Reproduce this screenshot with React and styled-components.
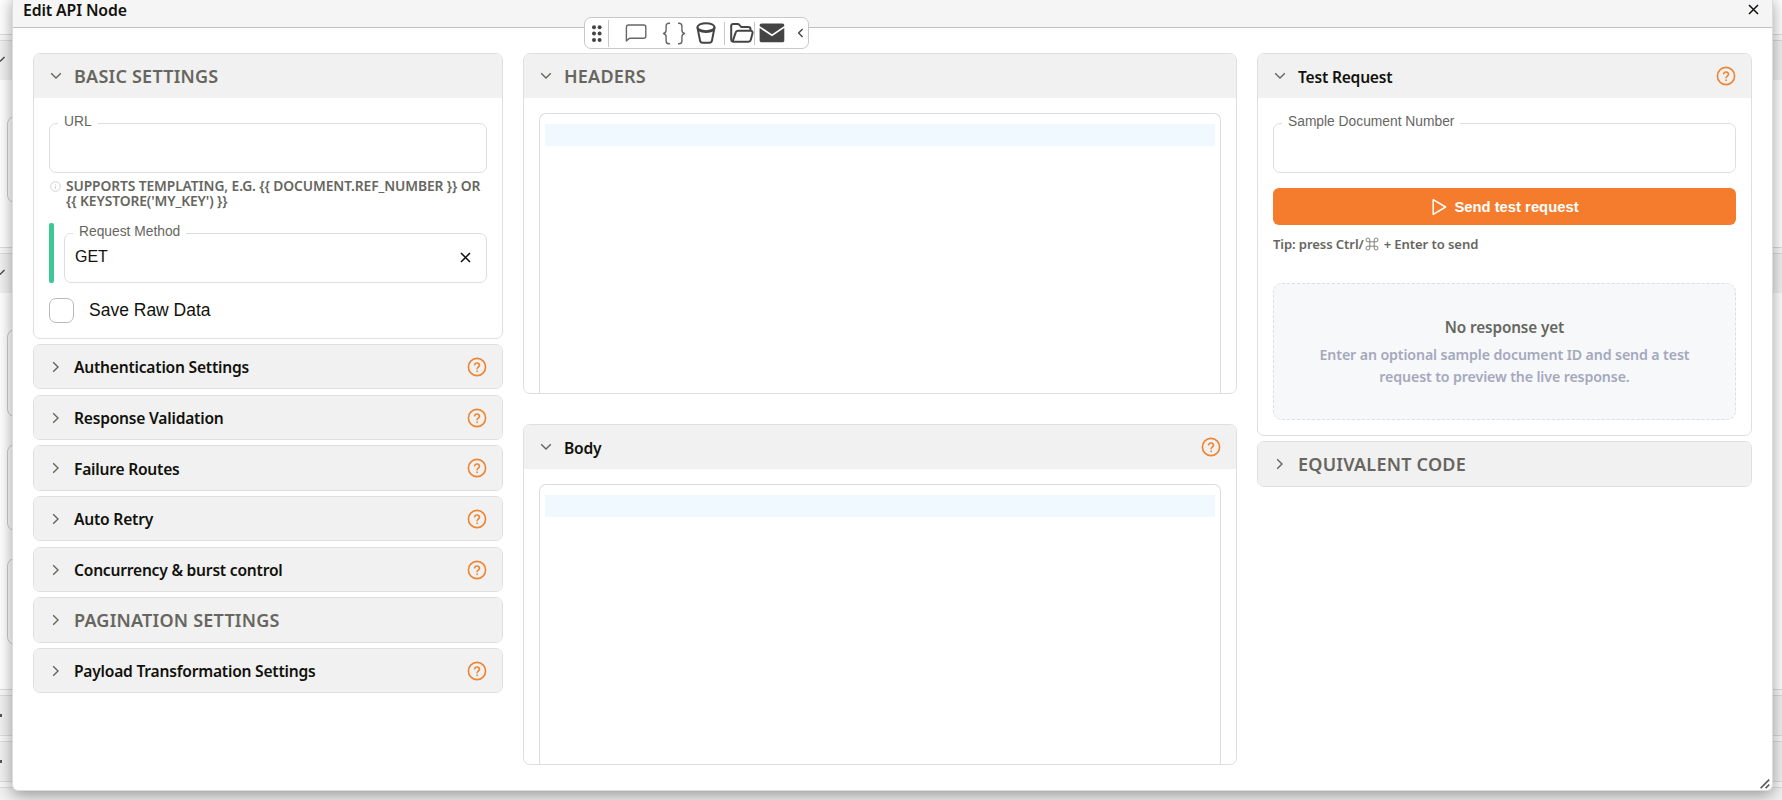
import { useState } from "react";
import styled, { createGlobalStyle } from "styled-components";

const PANELS = [
  { title: "Authentication Settings", help: true },
  { title: "Response Validation", help: true },
  { title: "Failure Routes", help: true },
  { title: "Auto Retry", help: true },
  { title: "Concurrency & burst control", help: true },
  { title: "PAGINATION SETTINGS", caps: true },
  { title: "Payload Transformation Settings", help: true },
];

const ChevronIcon = ({ open }) => (
  <Chevron viewBox="0 0 14 14" $open={open}>
    <path d="M4.2 2.2 9 7l-4.8 4.8" />
  </Chevron>
);

const HelpIcon = () => (
  <Help viewBox="0 0 20 20">
    <circle cx="10" cy="10" r="8.6" />
    <path d="M7.6 7.8a2.5 2.5 0 0 1 4.9.5c0 1.6-2.4 1.9-2.4 3.4" />
    <path d="M10.1 14v.4" />
  </Help>
);

const Panel = ({ title, caps, help, defaultOpen = false, height, children }) => {
  const [open, setOpen] = useState(defaultOpen);

  return (
    <Card $height={open ? height : undefined}>
      <CardHeader type="button" onClick={() => setOpen(!open)}>
        <ChevronIcon open={open} />
        <CardTitle $caps={caps}>{title}</CardTitle>
        {help && <HelpIcon />}
      </CardHeader>
      {open && children}
    </Card>
  );
};

const Editor = () => (
  <EditorBody>
    <EditorFrame>
      <ActiveLine />
    </EditorFrame>
  </EditorBody>
);

const FloatingToolbar = () => (
  <Toolbar>
    <ToolIcon width="13" height="19" viewBox="0 0 13 19" $fill $left={6}>
      <circle cx="3" cy="3.2" r="2" />
      <circle cx="8.6" cy="3.2" r="2" />
      <circle cx="3" cy="9.6" r="2" />
      <circle cx="8.6" cy="9.6" r="2" />
      <circle cx="3" cy="16" r="2" />
      <circle cx="8.6" cy="16" r="2" />
    </ToolIcon>
    <Divider $height={27} $left={4} />
    <ToolIcon width="22" height="18" viewBox="0 0 22 18" $left={16} $light>
      <path d="M3.2 1h15.6a2 2 0 0 1 2 2v9.2a2 2 0 0 1-2 2H5.6c-1.6 0-2 .5-2.700 1.300L1.400 17V3a2 2 0 0 1 1.800-2Z" />
    </ToolIcon>
    <ToolIcon width="24" height="23" viewBox="0 0 24 23" $left={15} $light>
      <path d="M8 1.2H7C4.8 1.2 4.1 2.2 4.1 4v4c0 2-.8 3-2.6 3.5 1.8.5 2.6 1.5 2.6 3.5v4c0 1.800.7 2.800 2.900 2.800h1" />
      <path d="M16 1.2h1c2.200 0 2.900 1 2.900 2.800v4c0 2 .8 3 2.600 3.500-1.800.5-2.600 1.500-2.600 3.500v4c0 1.800-.7 2.800-2.900 2.800h-1" />
    </ToolIcon>
    <ToolIcon width="20" height="22" viewBox="0 0 20 22" $left={10} $bold>
      <ellipse cx="10" cy="5.2" rx="8.6" ry="4" />
      <path d="M1.4 5.2 4 18.4C4.3 20 5.2 20.8 6.8 20.8h6.4c1.6 0 2.5-.8 2.8-2.4L18.6 5.2" />
      <path d="M3 8.3c3.4 2.2 10.6 2.2 14 0" />
    </ToolIcon>
    <Divider $height={23} $left={8} />
    <ToolIcon width="24" height="21" viewBox="0 0 24 21" $left={5} $bold>
      <path d="M2.6 18.6C1.6 18.3 1.2 17.6 1.2 16.5V3c0-1.200.7-2 2-2h4.200c1 0 1.500.2 2.100 1l1.600 2h7.200c1.500 0 2.200.8 2.200 2.200v1.600" />
      <path d="M2.6 18.6 5.6 9.6C6 8.3 6.7 7.8 8 7.8h12.6c1.6 0 2.3 1 1.9 2.5l-1.7 6.5c-.4 1.5-1 2-2.5 2H4c-.6 0-1-.1-1.4-.2Z" />
    </ToolIcon>
    <Divider $height={23} $left={0} />
    <ToolIcon width="26" height="20" viewBox="0 0 26 20" $fill $left={4}>
      <path d="M2.6.5h20.8c1.1 0 1.900.8 1.900 1.900v.6L13 11.2.6 3v-.6C.6 1.3 1.5.5 2.6.5Z" />
      <path d="M.6 5.100 13 13.300 25.300 5.100v12.300c0 1.100-.8 1.900-1.900 1.900H2.600c-1.100 0-2-.8-2-1.900Z" />
    </ToolIcon>
    <ToolIcon width="7" height="10" viewBox="0 0 7 10" $left={12}>
      <path d="M5.6 1 1.6 5l4 4" />
    </ToolIcon>
  </Toolbar>
);

const Backdrop = () => (
  <Canvas>
    <Spacer $height={34} />
    <Section>
      <SectionHead>
        <svg width="6" height="8" viewBox="0 0 6 8">
          <path d="M0 5.5 4.5 1" />
        </svg>
      </SectionHead>
    </Section>
    <NodeCard $top={36} $height={87} />
    <Spacer $height={44} />
    <Section>
      <SectionHead>
        <svg width="6" height="8" viewBox="0 0 6 8">
          <path d="M0 5.5 4.5 1" />
        </svg>
      </SectionHead>
    </Section>
    <NodeCard $top={36} $height={88} />
    <NodeCard $top={27} $height={87} />
    <NodeCard $top={27} $height={87} />
    <Spacer $height={44} />
    <ClosedSection>
      <Dot />
    </ClosedSection>
    <ClosedSection>
      <Dot />
    </ClosedSection>
    <ClosedSection />
  </Canvas>
);

const App = () => {
  const [saveRaw, setSaveRaw] = useState(false);

  return (
    <>
      <GlobalStyle />
      <Backdrop />
      <Dialog>
        <TitleBar>
          <DialogTitle>Edit API Node</DialogTitle>
          <CloseButton type="button" aria-label="Close">
            <svg width="11" height="11" viewBox="0 0 11 11">
              <path d="m1 1 9 9M10 1l-9 9" />
            </svg>
          </CloseButton>
        </TitleBar>

        <Columns>
          <Column>
            <Panel title="BASIC SETTINGS" caps defaultOpen height={285.33}>
              <BasicBody>
                <Field>
                  <FieldLabel>URL</FieldLabel>
                </Field>
                <Hint>
                  <svg width="11" height="11" viewBox="0 0 11 11">
                    <circle cx="5.5" cy="5.5" r="4.8" />
                    <path d="M5.5 3v.8M5.5 5v3" />
                  </svg>
                  <span>
                    SUPPORTS TEMPLATING, E.G. {"{{ DOCUMENT.REF_NUMBER }}"} OR
                    <br />
                    {"{{ KEYSTORE('MY_KEY') }}"}
                  </span>
                </Hint>
                <MethodRow>
                  <MethodBar />
                  <Field $grow>
                    <FieldLabel>Request Method</FieldLabel>
                    <FieldValue>GET</FieldValue>
                    <ClearIcon viewBox="0 0 11 11">
                      <path d="m1 1 9 9M10 1l-9 9" />
                    </ClearIcon>
                  </Field>
                </MethodRow>
                <CheckRow>
                  <Checkbox
                    type="checkbox"
                    checked={saveRaw}
                    onChange={(e) => setSaveRaw(e.target.checked)}
                  />
                  Save Raw Data
                </CheckRow>
              </BasicBody>
            </Panel>
            {PANELS.map((panel) => (
              <Panel key={panel.title} {...panel} />
            ))}
          </Column>

          <Column $gap={30}>
            <Panel title="HEADERS" caps defaultOpen height={341}>
              <Editor />
            </Panel>
            <Panel title="Body" help defaultOpen height={341}>
              <Editor />
            </Panel>
          </Column>

          <Column>
            <Panel title="Test Request" help defaultOpen height={382.67}>
              <RequestBody>
                <Field>
                  <FieldLabel>Sample Document Number</FieldLabel>
                </Field>
                <SendButton type="button">
                  <svg width="15" height="18" viewBox="0 0 15 18">
                    <path d="M1.2 1.6v14.8L13.6 9Z" />
                  </svg>
                  Send test request
                </SendButton>
                <Tip>
                  Tip: press Ctrl/
                  <CommandKey viewBox="0 0 14 14">
                    <path d="M4.8 4.8h4.4v4.4H4.8ZM4.8 4.8H3a1.9 1.9 0 1 1 1.8-1.9ZM9.2 4.8V2.9A1.9 1.9 0 1 1 11 4.8ZM9.2 9.2H11a1.9 1.9 0 1 1-1.8 1.9ZM4.8 9.2v1.9A1.9 1.9 0 1 1 3 9.2Z" />
                  </CommandKey>
                  + Enter to send
                </Tip>
                <EmptyState>
                  <EmptyTitle>No response yet</EmptyTitle>
                  <EmptyText>
                    Enter an optional sample document ID and send a test
                    <br />
                    request to preview the live response.
                  </EmptyText>
                </EmptyState>
              </RequestBody>
            </Panel>
            <Panel title="EQUIVALENT CODE" caps />
          </Column>
        </Columns>

        <ResizeHandle viewBox="0 0 10 10">
          <path d="M.6 9.2 9.2.6M5.6 9.2l3.6-3.6" />
        </ResizeHandle>
      </Dialog>
      <FloatingToolbar />
    </>
  );
};

// Base
const GlobalStyle = createGlobalStyle`
  * {
    box-sizing: border-box;
  }

  body {
    margin: 0;
    height: 800px;
    overflow: hidden;
    background: #fff;
    color: #11110d;
    font-family: "Noto Sans", "Open Sans", sans-serif;
    font-weight: 600;
  }
`;

// Page behind the dialog
const Canvas = styled.div`
  display: flex;
  flex-direction: column;
  height: 800px;
  background: #fff;
`;

const Spacer = styled.div`
  height: ${(props) => props.$height}px;
  flex-shrink: 0;
`;

const Section = styled.div`
  height: 46px;
  flex-shrink: 0;
  padding-top: 5px;
  border-top: 1px solid #dcdcdc;
  background: #f9f9f9;
`;

const SectionHead = styled.div`
  height: 40px;
  padding-top: 15px;
  border-top: 1px solid #dcdcdc;
  background: #f1f1f1;

  svg {
    display: block;
    fill: none;
    stroke: #444;
    stroke-width: 1.3;
  }
`;

const NodeCard = styled.div`
  height: ${(props) => props.$height}px;
  margin: ${(props) => props.$top}px 40px 0 7px;
  flex-shrink: 0;
  border: 1px solid #ccc;
  border-radius: 8px;
`;

const ClosedSection = styled.div`
  display: flex;
  align-items: center;
  height: 46px;
  flex-shrink: 0;
  border-top: 1px solid #dcdcdc;
  background: linear-gradient(#f9f9f9 5px, #dcdcdc 5px, #dcdcdc 6px, #f1f1f1 6px);

  &:last-child {
    height: auto;
    flex: 1;
  }
`;

const Dot = styled.span`
  width: 2px;
  height: 3px;
  margin-top: 6px;
  background: #555;
`;

// Dialog
const Dialog = styled.div`
  position: absolute;
  top: -4px;
  left: 12px;
  width: 1761px;
  height: 795px;
  padding-top: 4px;
  display: flex;
  flex-direction: column;
  background: #fff;
  border: 1px solid #dcdcdc;
  border-top: none;
  border-radius: 0 0 6px 6px;
  box-shadow: 0 4px 16px rgba(0, 0, 0, 0.38);
`;

const TitleBar = styled.div`
  display: flex;
  align-items: flex-start;
  justify-content: space-between;
  height: 28px;
  flex-shrink: 0;
  padding: 0 13px 0 10px;
  background: #f5f5f5;
  border-bottom: 1px solid #c2c2c2;
`;

const DialogTitle = styled.h1`
  margin: 0;
  font-size: 15.8px;
  font-weight: 600;
  line-height: 21px;
  letter-spacing: -0.12px;
`;

const CloseButton = styled.button`
  display: flex;
  padding: 4px 0 0;
  border: none;
  background: none;
  cursor: pointer;

  path {
    fill: none;
    stroke: #11110d;
    stroke-width: 1.5;
  }
`;

const Columns = styled.div`
  display: grid;
  grid-template-columns: 470px 714px 495px;
  align-items: start;
  gap: 20px;
  padding: 25.33px 20px 0;
`;

const Column = styled.div`
  display: flex;
  flex-direction: column;
  gap: ${(props) => props.$gap || 5.33}px;
`;

const ResizeHandle = styled.svg`
  position: absolute;
  right: 2px;
  bottom: 1px;
  width: 10px;
  height: 10px;
  fill: none;
  stroke: #555;
  stroke-width: 1.6;
`;

// Panels
const Card = styled.section`
  display: flex;
  flex-direction: column;
  height: ${(props) => (props.$height ? `${props.$height}px` : "45.33px")};
  overflow: hidden;
  background: #fff;
  border: 1px solid #dfdfdf;
  border-radius: 7px;
`;

const CardHeader = styled.button`
  display: flex;
  align-items: center;
  gap: 11px;
  width: 100%;
  height: 44px;
  flex-shrink: 0;
  padding: 0 15px;
  border: none;
  background: #f1f1f1;
  color: inherit;
  font: inherit;
  text-align: left;
  cursor: pointer;
`;

const CardTitle = styled.span`
  flex: 1;
  padding-top: ${(props) => (props.$caps ? 0 : 1)}px;
  font-size: ${(props) => (props.$caps ? "18px" : "15.6px")};
  letter-spacing: ${(props) => (props.$caps ? "0.22px" : "-0.22px")};
  color: ${(props) => (props.$caps ? "#66665f" : "#11110d")};
  line-height: 22px;
`;

const Chevron = styled.svg`
  width: 14px;
  height: 14px;
  flex-shrink: 0;
  transform: ${(props) => (props.$open ? "rotate(90deg)" : "none")};
  fill: none;
  stroke: #66665f;
  stroke-width: 1.4;
`;

const Help = styled.svg`
  width: 20px;
  height: 20px;
  flex-shrink: 0;
  fill: none;
  stroke: #ee8330;
  stroke-width: 1.6;
  stroke-linecap: round;
`;

const BasicBody = styled.div`
  display: flex;
  flex-direction: column;
  padding: 25px 15px 0;
`;

// Fields
const Field = styled.div`
  position: relative;
  display: flex;
  align-items: center;
  justify-content: space-between;
  height: 50px;
  flex: ${(props) => (props.$grow ? 1 : "none")};
  padding: 0 15px 1px 10px;
  border: 1px solid #dedede;
  border-radius: 7px;
`;

const FieldLabel = styled.label`
  position: absolute;
  top: -11px;
  left: 8px;
  padding: 0 6px;
  background: #fff;
  color: #66665f;
  font: 13.8px/18px "Liberation Sans", sans-serif;
`;

const FieldValue = styled.span`
  font: 16px/20px "Liberation Sans", sans-serif;
`;

const ClearIcon = styled.svg`
  width: 11px;
  height: 11px;
  fill: none;
  stroke: #11110d;
  stroke-width: 1.5;
`;

const Hint = styled.div`
  display: flex;
  gap: 5px;
  height: 35.5px;
  padding: 4.5px 0 0 1px;
  color: #66665f;
  font-size: 13.8px;
  line-height: 15.33px;
  letter-spacing: -0.1px;
  white-space: nowrap;

  svg {
    margin-top: 3px;
    fill: none;
    stroke: #d2d2d2;
    stroke-width: 1;
  }
`;

const MethodRow = styled.div`
  display: flex;
  align-items: flex-end;
  gap: 10px;
  margin-top: 14px;
`;

const MethodBar = styled.div`
  width: 5px;
  height: 60px;
  border-radius: 2px;
  background: #3cc795;
`;

const CheckRow = styled.label`
  display: flex;
  align-items: center;
  gap: 15px;
  height: 25px;
  margin-top: 15px;
  font: 17.5px/24px "Liberation Sans", sans-serif;
`;

const Checkbox = styled.input`
  appearance: none;
  width: 25px;
  height: 25px;
  margin: 0;
  border: 1px solid #b9b9b9;
  border-radius: 7px;
  background: #fff;

  &:checked {
    background: #f47c2c;
  }
`;

// Code editor
const EditorBody = styled.div`
  flex: 1;
  display: flex;
  padding: 15px 15px 0;
`;

const EditorFrame = styled.div`
  flex: 1;
  padding: 10px 5px 0;
  border: 1px solid #dcdcdc;
  border-bottom: none;
  border-radius: 7px 7px 0 0;
`;

const ActiveLine = styled.div`
  height: 22px;
  background: #f0f9ff;
`;

// Test request
const RequestBody = styled.div`
  display: flex;
  flex-direction: column;
  padding: 25px 15px 0;
`;

const SendButton = styled.button`
  display: flex;
  align-items: center;
  justify-content: center;
  gap: 7px;
  height: 37px;
  margin-top: 15px;
  padding: 0 0 0 2px;
  border: none;
  border-radius: 6px;
  background: #f47c2c;
  color: #fff;
  font: bold 14.8px/20px "Liberation Sans", sans-serif;
  cursor: pointer;

  path {
    fill: none;
    stroke: #fff;
    stroke-width: 1.5;
    stroke-linejoin: round;
  }
`;

const Tip = styled.p`
  display: flex;
  align-items: center;
  margin: 9px 0 0;
  height: 20px;
  color: #66665f;
  font-size: 13.1px;
  line-height: 20px;
  letter-spacing: -0.1px;
`;

const CommandKey = styled.svg`
  width: 14px;
  height: 14px;
  margin: 0 5px 0 1px;
  fill: none;
  stroke: #77776f;
  stroke-width: 0.9;
`;

const EmptyState = styled.div`
  display: flex;
  flex-direction: column;
  align-items: center;
  justify-content: center;
  gap: 6px;
  height: 137px;
  margin-top: 29px;
  padding-top: 1px;
  border: 1px dashed #dbdfdf;
  border-radius: 9px;
  background: #f7f8fa;
  text-align: center;
`;

const EmptyTitle = styled.h2`
  margin: 0;
  color: #66665f;
  font-size: 15.3px;
  font-weight: 600;
  line-height: 22px;
  letter-spacing: -0.12px;
`;

const EmptyText = styled.p`
  margin: 0;
  color: #a5a8bd;
  font-size: 14.2px;
  line-height: 22px;
  letter-spacing: -0.12px;
`;

// Toolbar floating over the dialog edge
const Toolbar = styled.div`
  position: absolute;
  top: 17px;
  left: 584px;
  display: flex;
  align-items: center;
  width: 225px;
  height: 32px;
  background: #fff;
  border: 1px solid #c8c8c8;
  border-radius: 7px;
`;

const ToolIcon = styled.svg`
  flex-shrink: 0;
  margin-left: ${(props) => props.$left}px;
  fill: ${(props) => (props.$fill ? "#444" : "none")};
  stroke: ${(props) => (props.$fill ? "none" : props.$light ? "#666" : "#444")};
  stroke-width: ${(props) => (props.$bold ? 2 : 1.4)};
  stroke-linejoin: round;
`;

const Divider = styled.span`
  width: 1px;
  height: ${(props) => props.$height}px;
  flex-shrink: 0;
  margin-left: ${(props) => props.$left}px;
  background: #c8c8c8;
`;

export default App;
